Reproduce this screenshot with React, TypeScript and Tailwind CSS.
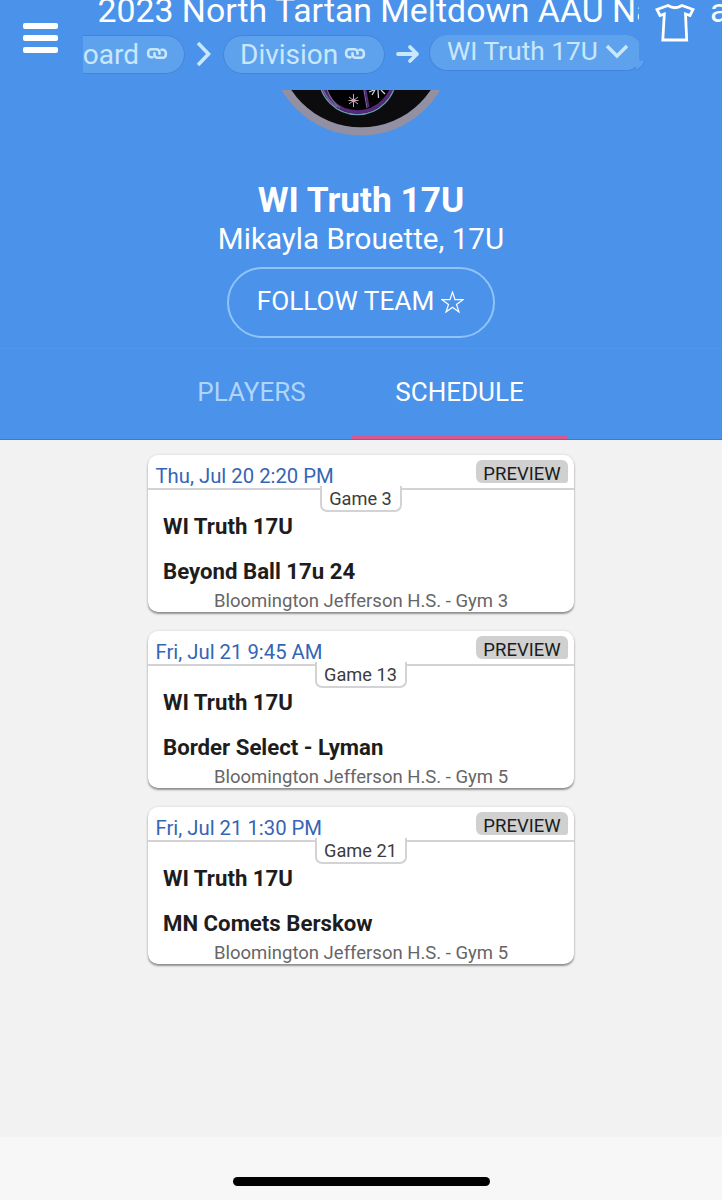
import React from "react";

const games = [
  { date: "Thu, Jul 20 2:20 PM", game: "Game 3", width: "w-[82px]", away: "Beyond Ball 17u 24", place: "Bloomington Jefferson H.S. - Gym 3" },
  { date: "Fri, Jul 21 9:45 AM", game: "Game 13", width: "w-[92px]", away: "Border Select - Lyman", place: "Bloomington Jefferson H.S. - Gym 5" },
  { date: "Fri, Jul 21 1:30 PM", game: "Game 21", width: "w-[92px]", away: "MN Comets Berskow", place: "Bloomington Jefferson H.S. - Gym 5" },
];

function LinkIcon() {
  const half = "M6.500 10.300H5.200A3 3 0 0 1 2.200 7.300V5.200A3 3 0 0 1 5.200 2.200H10.500A3 3 0 0 1 13.500 5.200V6.800";
  return (
    <svg width="22" height="13" viewBox="0 0 22 13" fill="none" stroke="currentColor" strokeWidth="2.6" strokeLinecap="round" strokeLinejoin="round" className="-mt-[2px] shrink-0">
      <path d={half} />
      <path d={half} transform="rotate(180 11 6.5)" />
    </svg>
  );
}

function GameCard({ g }: { g: (typeof games)[number] }) {
  return (
    <article className="flex h-[157px] w-[426px] flex-col rounded-[10px] bg-white shadow-[0_2px_2px_rgba(0,0,0,0.38),0_0_3px_rgba(0,0,0,0.12)]">
      <div className="flex h-[35px] shrink-0 justify-between border-b-2 border-[#d3d3d6] pl-[7.5px] pr-[6px] pt-[5px]">
        <span className="text-[20.3px] leading-[32px] text-[#3565b5]">{g.date}</span>
        <span className="h-[23px] w-[92px] rounded-[6px] rounded-br-[3px] bg-[#d0d0d0] text-center text-[18.5px] leading-[28px] text-[#1c1c1c]">PREVIEW</span>
      </div>
      <div className="-mt-[4px] flex h-[26px] shrink-0 justify-center">
        <span className={`${g.width} rounded-b-[7px] border-2 border-t-0 border-[#d3d3d6] bg-white pr-[1px] text-center text-[18.2px] leading-[26px] text-[#3c3c3c]`}>{g.game}</span>
      </div>
      <div className="-mt-[1px] flex flex-col pl-[15px] text-[22.2px] font-bold leading-[30px] text-[#1d1d1d]">
        <span>WI Truth 17U</span>
        <span className="mt-[15px]">{g.away}</span>
      </div>
      <span className="text-center text-[18.5px] leading-[30px] text-[#666]">{g.place}</span>
    </article>
  );
}

export default function App() {
  return (
    <div className="flex h-[1200px] w-[722px] flex-col overflow-hidden bg-[#f2f2f2] font-[Roboto,sans-serif]">
      <header className="flex h-[90px] shrink-0 bg-[#4a92ea] text-white">
        <div className="flex w-[83px] shrink-0 flex-col gap-[6px] pl-[23px] pt-[23px]">
          <span className="h-[6px] w-[35px] rounded-[2px] bg-white" />
          <span className="h-[6px] w-[35px] rounded-[2px] bg-white" />
          <span className="h-[6px] w-[35px] rounded-[2px] bg-white" />
        </div>
        <div className="flex w-[556px] shrink-0 flex-col overflow-hidden">
          <div className="-mt-[10px] h-[41px] whitespace-nowrap pl-[14.5px] text-[33.8px] leading-[41px]">2023 North Tartan Meltdown AAU Nationals</div>
          <nav className="flex h-[44px] items-start pt-[4px] text-[28px] text-[#c9e7fd]">
            <div className="-ml-[40px] flex h-[39px] w-[142px] shrink-0 items-center justify-end gap-[7px] rounded-full border border-[#4485da] bg-[#5ea2ed] pr-[16px]">
              <span>Board</span>
              <LinkIcon />
            </div>
            <svg width="16" height="26" viewBox="0 0 16 26" className="ml-[11px] mt-[6px] shrink-0" fill="none" stroke="currentColor" strokeWidth="3.6"><path d="M2 2l10.500 11L2 24" /></svg>
            <div className="ml-[11px] flex h-[39px] w-[162px] shrink-0 items-center gap-[6px] rounded-full border border-[#4485da] bg-[#5ea2ed] pl-[16px]">
              <span>Division</span>
              <LinkIcon />
            </div>
            <svg width="24" height="20" viewBox="0 0 24 20" className="ml-[11px] mt-[9px] shrink-0" fill="none" stroke="currentColor" strokeWidth="3.8" strokeLinecap="round" strokeLinejoin="round"><path d="M2 10h19M14 3l7 7-7 7" /></svg>
            <div className="ml-[9px] flex h-[36px] w-[215px] shrink-0 items-center gap-[7px] rounded-full border border-t-0 border-[#4485da] bg-[#5ea2ed] pl-[17px]">
              <span className="-mt-[1px] text-[26.3px]">WI Truth 17U</span>
              <svg width="24" height="15" viewBox="0 0 24 15" className="-mt-[3px]" fill="none" stroke="currentColor" strokeWidth="3.4"><path d="M2 2l10 10L22 2" /></svg>
            </div>
          </nav>
        </div>
        <div className="relative flex w-[83px] shrink-0">
          <svg width="42" height="44" viewBox="0 0 42 44" className="ml-[15px] shrink-0" fill="none" stroke="white" strokeWidth="2.800" strokeLinejoin="miter">
            <path d="M14 5.500Q21 10 28 5.500L39 9.500L36 15.500L31.500 14L32.700 40H8.800L10.300 14L6 15.500L3 9.500Z" />
          </svg>
          <span className="-mt-[10px] ml-[14px] text-[33.8px] leading-[41px]">a</span>
          <svg width="10" height="13" viewBox="0 0 10 13" className="absolute -left-[3px] top-[59px]">
            <path d="M0 0H3L4 2H9Q6.500 8 0 11.500Z" fill="#5ea2ed" />
            <path d="M9 2Q6.500 8 0 11.500" fill="none" stroke="#4485da" />
          </svg>
        </div>
      </header>
      <section className="flex h-[258px] shrink-0 flex-col items-center bg-[#4a92ea] text-white">
        <svg width="170" height="48" viewBox="276 90 170 48" className="shrink-0">
          <circle cx="361" cy="44" r="91.600" fill="#9290a2" />
          <circle cx="361" cy="43.500" r="83.800" fill="#0c0c0e" />
          <circle cx="357.500" cy="76" r="38.500" fill="#020204" stroke="#64a0b0" strokeWidth="1.500" />
          <circle cx="357.500" cy="75.500" r="36.500" fill="none" stroke="#572879" strokeWidth="3.500" />
          <path d="M327 90q5 12 13 18M323 90q6 12 14 17M364 90l3 18" stroke="#79689c" strokeWidth="1.200" fill="none" />
          <path d="M365.500 90l3 17" stroke="#572879" strokeWidth="2" />
          <path d="M353.500 94v13M349 97l9 7M349 104l9-7M348.500 100.500h10" stroke="#b9b3ad" strokeWidth="1" />
          <circle cx="353.500" cy="100.500" r="2" fill="#d59ac8" />
          <path d="M378 90l.5 8M375 90l-3 5M381 90l4 4M374 90l-5 2" stroke="#d8d8e0" strokeWidth="1.200" />
        </svg>
        <h1 className="mt-[42px] text-[35.3px] font-bold leading-[41px]">WI Truth 17U</h1>
        <p className="text-[29.600px] leading-[37px]">Mikayla Brouette, 17U</p>
        <button className="mt-[9px] flex h-[71px] w-[268px] items-center justify-center gap-[7px] rounded-full border-2 border-[#8fc4f8] pb-[2px] pr-[1px] text-[26.2px]">
          <span>FOLLOW TEAM</span>
          <svg width="23" height="22" viewBox="0 0 23 22" fill="none" stroke="white" strokeWidth="1.200"><path d="M11.500 1l2.500 7.700h8l-6.500 4.700 2.500 7.600-6.500-4.700L5 21l2.500-7.600L1 8.700h8z" /></svg>
        </button>
      </section>
      <div className="flex h-[92px] shrink-0 justify-center border-b border-t border-b-[#377cd0] border-t-[#4f97ee] bg-[#4a92ea] pr-[2px] text-[26px] leading-[87px]">
        <span className="w-[199px] text-center text-[#afd5fb]">PLAYERS</span>
        <span className="w-[217px] border-b-4 border-[#d55a8f] text-center text-white">SCHEDULE</span>
      </div>
      <main className="flex flex-1 flex-col items-center gap-[19px] pt-[15px]">
        {games.map((g) => <GameCard key={g.date} g={g} />)}
      </main>
      <footer className="flex h-[63px] shrink-0 justify-center bg-[#f7f7f7] pt-[40px]">
        <span className="h-[9px] w-[257px] rounded-full bg-black" />
      </footer>
    </div>
  );
}
